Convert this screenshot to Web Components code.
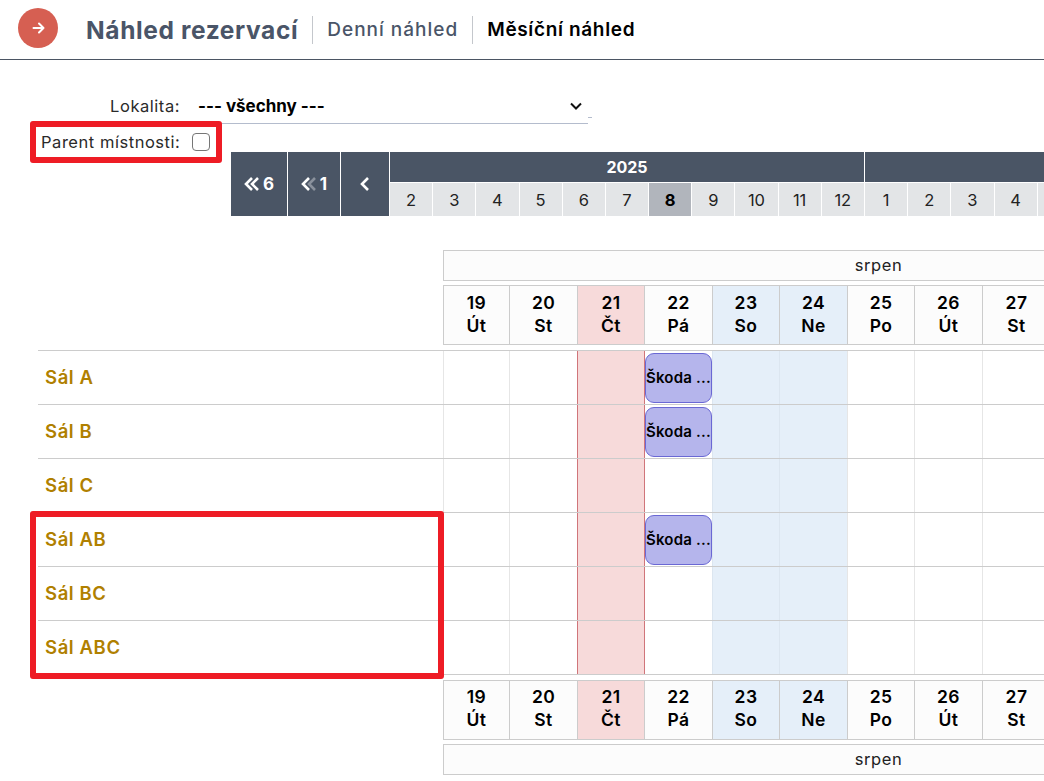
<!DOCTYPE html>
<html lang="cs">
<head>
<meta charset="utf-8">
<title>Náhled rezervací</title>
<style>
  html, body { margin:0; height:100%; overflow:hidden; background:#fff; }
  body { font-family:Inter, "Liberation Sans", sans-serif; color:#000; }
</style>
</head>
<body>
<res-page></res-page>
<script>
const DAYS = [
  ['19','Út'], ['20','St'], ['21','Čt','today'], ['22','Pá'], ['23','So','weekend'],
  ['24','Ne','weekend'], ['25','Po'], ['26','Út'], ['27','St']
];
const ROOMS = [
  ['Sál A', true], ['Sál B', true], ['Sál C', false],
  ['Sál AB', true], ['Sál BC', false], ['Sál ABC', false]
];
const COLS = '66px 68px 67px 68px 67px 68px 67px 68px 68px';

class ResHeader extends HTMLElement {
  constructor() {
    super();
    this.attachShadow({ mode: 'open' }).innerHTML = `
      <style>
        :host { display:flex; align-items:center; height:59px; border-bottom:1px solid #4b5563; padding-left:18px; }
        .back { width:40px; height:40px; border-radius:50%; background:#d65f52; display:flex; align-items:center; justify-content:center; margin:-3px 28px 0 0; }
        .title { font-size:24.5px; font-weight:700; color:#4a5568; padding-right:14px; letter-spacing:.62px; white-space:nowrap; }
        .tab { font-size:19px; font-weight:500; color:#4a5568; padding:0 14px; height:28px; line-height:28px; border-left:1px solid #c4c7cc; letter-spacing:1px; white-space:nowrap; }
        .tab.on { color:#000; font-weight:600; letter-spacing:.65px; }
      </style>
      <div class="back"><svg width="13" height="12" viewBox="0 0 13 12" fill="none" stroke="#fff" stroke-width="2" stroke-linecap="round" stroke-linejoin="round"><path d="M1.5 6h10M7 1.5L11.5 6 7 10.5"/></svg></div>
      <div class="title">Náhled rezervací</div>
      <div class="tab">Denní náhled</div>
      <div class="tab on">Měsíční náhled</div>`;
  }
}

class ResFilters extends HTMLElement {
  constructor() {
    super();
    this.attachShadow({ mode: 'open' }).innerHTML = `
      <style>
        :host { display:block; height:92px; box-sizing:border-box; padding-top:28px; font-size:16.5px; color:#2a2a2a; letter-spacing:.54px; }
        .loc { display:flex; align-items:center; height:36px; }
        .lab { width:180px; text-align:right; }
        .sel { position:relative; margin-left:8px; width:400px; height:36px; box-sizing:border-box; border-bottom:1px solid #b4bccd; display:flex; align-items:center; justify-content:space-between; padding:0 6px 0 10px; font-size:17px; font-weight:700; color:#000; letter-spacing:0; }
        .sel::after { content:""; position:absolute; left:400px; top:29px; width:4px; height:1px; background:#b4bccd; }
        .par { display:flex; align-items:center; height:36px; padding-left:41px; gap:12px; }
        .box { width:18px; height:18px; box-sizing:border-box; border:1.5px solid #767676; border-radius:4px; background:#fff; }
      </style>
      <div class="loc">
        <div class="lab">Lokalita:</div>
        <div class="sel"><span>--- všechny ---</span>
          <svg width="12" height="8" viewBox="0 0 12 8" fill="none" stroke="#111" stroke-width="2"><path d="M1 1.5l5 5 5-5"/></svg></div>
      </div>
      <div class="par"><span>Parent místnosti:</span><span class="box"></span></div>`;
  }
}

class ResTimeline extends HTMLElement {
  constructor() {
    super();
    const months = [2,3,4,5,6,7,8,9,10,11,12].map(m => `<div class="m${m===8?' cur':''}">${m}</div>`).join('');
    const next = [1,2,3,4].map(m => `<div class="m">${m}</div>`).join('') + '<div class="m"></div>';
    this.attachShadow({ mode: 'open' }).innerHTML = `
      <style>
        :host { display:flex; height:64px; margin-left:231px; gap:1px; width:813px; overflow:hidden; }
        .nav { flex:none; background:#4a5565; color:#fff; display:flex; align-items:center; justify-content:center; gap:3px; font-size:17px; font-weight:700; }
        .year { display:flex; flex-direction:column; gap:1px; flex:none; }
        .y { height:30px; background:#4a5565; color:#fff; font-size:16px; font-weight:700; text-align:center; line-height:30px; }
        .ms { display:flex; gap:1px; }
        .m { width:42.18px; height:33px; background:#e3e5e7; text-align:center; line-height:34px; font-size:16.5px; color:#222; }
        .m.cur { background:#b1b5bc; font-weight:700; color:#000; }
      </style>
      <div class="nav" style="width:56px"><svg width="16" height="14" viewBox="0 0 16 14" fill="none" stroke="#fff" stroke-width="2.6"><path d="M8 1L2 7l6 6M14 1L8 7l6 6"/></svg>6</div>
      <div class="nav" style="width:52px"><svg width="16" height="14" viewBox="0 0 16 14" fill="none" stroke-width="2.6"><path stroke="#8a919c" d="M14 1L8 7l6 6"/><path stroke="#fff" d="M8 1L2 7l6 6"/></svg>1</div>
      <div class="nav" style="width:48px"><svg width="10" height="14" viewBox="0 0 10 14" fill="none" stroke="#fff" stroke-width="2.6"><path d="M8 1L2 7l6 6"/></svg></div>
      <div class="year" style="width:474px"><div class="y">2025</div><div class="ms">${months}</div></div>
      <div class="year"><div class="y">&nbsp;</div><div class="ms">${next}</div></div>`;
  }
}

class ResMonthBar extends HTMLElement {
  constructor() {
    super();
    this.attachShadow({ mode: 'open' }).innerHTML = `
      <style>
        :host { display:block; margin-left:405px; width:871px; height:31px; box-sizing:border-box; border:1px solid #ccc; background:#fcfcfc; text-align:center; font-size:16.5px; line-height:29px; color:#222; letter-spacing:.6px; }
      </style><slot></slot>`;
  }
}

class ResDayHeader extends HTMLElement {
  constructor() {
    super();
    const cells = DAYS.map(d => `<div class="d ${d[2]||''}">${d[0]}<br>${d[1]}</div>`).join('');
    this.attachShadow({ mode: 'open' }).innerHTML = `
      <style>
        :host { display:grid; grid-template-columns:${COLS}; margin-left:405px; width:639px; height:60px; box-sizing:border-box; border:solid #ccc; border-width:1px 0 1px 1px; overflow:hidden; }
        :host(.low) .d { padding-top:4px; }
        .d { background:#fcfcfc; border-right:1px solid #ccc; box-sizing:border-box; text-align:center; font-size:17.5px; line-height:23px; font-weight:600; padding-top:5px; letter-spacing:.4px; }
        .today { background:#f7dada; }
        .weekend { background:#e5eff9; }
      </style>${cells}`;
  }
}

class ResRoomRow extends HTMLElement {
  constructor() {
    super();
    const name = this.getAttribute('name');
    const booked = this.hasAttribute('booked');
    const cells = DAYS.map((d, i) => `<div class="c ${d[2]||''}">${i===3 && booked ? '<div class="ev">Škoda ...</div>' : ''}</div>`).join('');
    this.attachShadow({ mode: 'open' }).innerHTML = `
      <style>
        :host { display:grid; grid-template-columns:405px ${COLS}; height:54px; box-sizing:border-box; border-top:1px solid #ccc; }
        .n { color:#b08000; font-size:18.5px; font-weight:600; padding-left:7px; line-height:53px; letter-spacing:.6px; }
        .c { border-left:1px solid #e6e6e6; box-sizing:border-box; padding-top:2px; }
        .today { background:#f7dada; border-left:1px solid #d0757a; }
        .today + .c { border-left:1px solid #d0757a; }
        .weekend { background:#e5eff9; border-left-color:#dce6f0; }
        .ev { height:50px; box-sizing:border-box; border:1px solid #6a68d4; border-radius:9px; background:#b5b5ec; font-size:15px; font-weight:600; color:#000; letter-spacing:.2px; display:flex; align-items:center; justify-content:center; padding-bottom:2px; white-space:nowrap; overflow:hidden; }
      </style><div class="n">${name}</div>${cells}`;
  }
}

class ResMark extends HTMLElement {
  constructor() {
    super();
    this.attachShadow({ mode: 'open' }).innerHTML = `
      <style>
        :host { display:block; position:absolute; box-sizing:border-box; border:6px solid #ee1c25; border-radius:3px; pointer-events:none; }
      </style>`;
  }
}

class ResPage extends HTMLElement {
  constructor() {
    super();
    const rows = ROOMS.map(r => `<res-room-row name="${r[0]}"${r[1] ? ' booked' : ''}></res-room-row>`).join('');
    this.attachShadow({ mode: 'open' }).innerHTML = `
      <style>
        :host { display:block; position:relative; width:1044px; height:781px; overflow:hidden; }
        .cal { margin:34px 0 0 38px; }
        .hd { margin-top:4px; }
        .rows { margin-top:5px; border-bottom:1px solid #ccc; }
        .hd2 { margin-top:5px; }
        .mb2 { margin-top:4px; }
      </style>
      <res-header></res-header>
      <res-filters></res-filters>
      <res-timeline></res-timeline>
      <div class="cal">
        <res-month-bar>srpen</res-month-bar>
        <res-day-header class="hd"></res-day-header>
        <div class="rows">${rows}</div>
        <res-day-header class="hd2 low"></res-day-header>
        <res-month-bar class="mb2">srpen</res-month-bar>
      </div>
      <res-mark style="left:30px;top:121px;width:192px;height:42px"></res-mark>
      <res-mark style="left:30px;top:511px;width:414px;height:168px"></res-mark>`;
  }
}

customElements.define('res-header', ResHeader);
customElements.define('res-filters', ResFilters);
customElements.define('res-timeline', ResTimeline);
customElements.define('res-month-bar', ResMonthBar);
customElements.define('res-day-header', ResDayHeader);
customElements.define('res-room-row', ResRoomRow);
customElements.define('res-mark', ResMark);
customElements.define('res-page', ResPage);
</script>
</body>
</html>
